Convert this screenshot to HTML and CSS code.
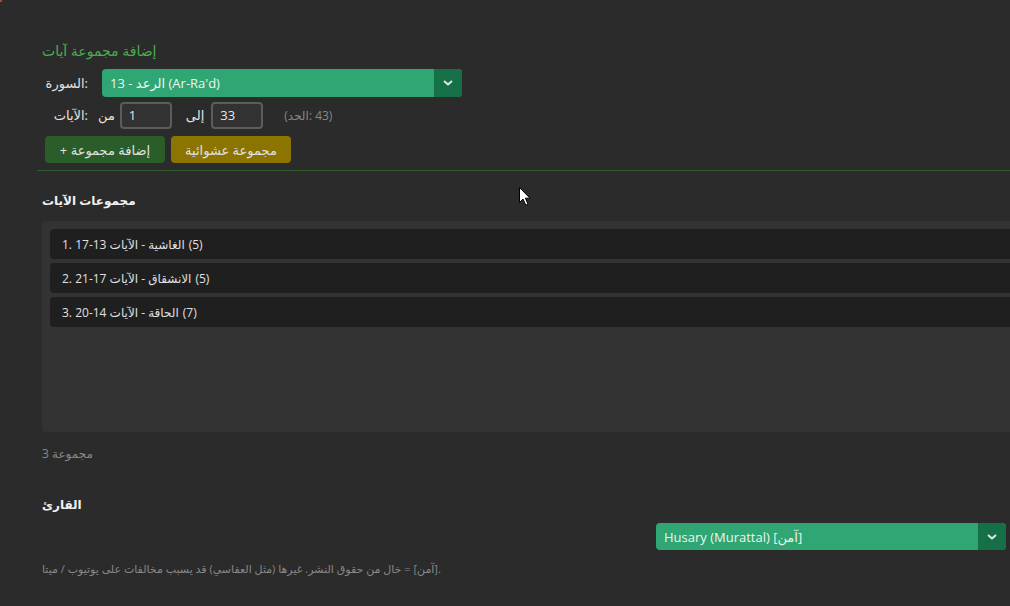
FILE: index.html
```html
<!DOCTYPE html>
<html lang="ar">
<head>
    <meta charset="UTF-8">
    <title>مجموعات الآيات</title>
    <link rel="stylesheet" href="styles.css">
</head>
<body>
<div class="corner-dot"></div>
<div class="panel">
    <section class="add-set">
        <h3 class="add-title">إضافة مجموعة آيات</h3>
        <div class="form-row">
            <label class="row-label">السورة:</label>
            <div class="select-wrap surah-select">
                <select name="surah">
                    <option value="13">13 - الرعد (Ar-Ra'd)</option>
                </select>
                <span class="select-arrow">
                    <svg width="10" height="6" viewBox="0 0 10 6"><polyline points="1,1 5,4.5 9,1" fill="none" stroke="#e6e6e6" stroke-width="2"/></svg>
                </span>
            </div>
        </div>
        <div class="form-row">
            <label class="row-label">الآيات:</label>
            <span class="row-word">من</span>
            <input type="number" name="from" value="1" class="ayah-input">
            <span class="row-word word-to">إلى</span>
            <input type="number" name="to" value="33" class="ayah-input">
            <span class="limit"><span>(الحد:</span><span>&nbsp;43)</span></span>
        </div>
        <div class="btn-row">
            <button class="btn btn-add">+ إضافة مجموعة</button>
            <button class="btn btn-random">مجموعة عشوائية</button>
        </div>
    </section>

    <section class="sets">
        <h3 class="section-title">مجموعات الآيات</h3>
        <div class="set-list">
            <div class="set-item"><span>1. الغاشية - الآيات 13-17</span><span>(5)</span></div>
            <div class="set-item"><span>2. الانشقاق - الآيات 17-21</span><span>(5)</span></div>
            <div class="set-item"><span>3. الحاقة - الآيات 14-20</span><span>(7)</span></div>
        </div>
        <div class="set-total">3 مجموعة</div>
    </section>

    <section class="reciter">
        <h3 class="section-title">القارئ</h3>
        <div class="reciter-row">
            <div class="select-wrap reciter-select">
                <select name="reciter">
                    <option value="husary">Husary (Murattal) [آمن]</option>
                </select>
                <span class="select-arrow">
                    <svg width="10" height="6" viewBox="0 0 10 6"><polyline points="1,1 5,4.5 9,1" fill="none" stroke="#e6e6e6" stroke-width="2"/></svg>
                </span>
            </div>
        </div>
        <p class="note"><bdi dir="rtl">[آمن] = خال من حقوق النشر. غيرها (مثل العفاسي) قد يسبب مخالفات على يوتيوب / ميتا</bdi>.</p>
    </section>
</div>
<svg class="cursor" width="14" height="21" viewBox="0 0 14 21">
    <path d="M1.5 1.5 L1.5 16.5 L5 13 L7.8 19.2 L10 18.2 L7.4 12.2 L12 12.2 Z" fill="#fff" stroke="#000" stroke-width="1"/>
</svg>
</body>
</html>
```

FILE: styles.css
```css
body {
    margin: 0;
    background-color: #2b2b2b;
    color: #e6e6e6;
    font-family: "Open Sans", "DejaVu Sans", sans-serif;
    font-size: 13px;
    overflow: hidden;
}

.corner-dot {
    position: absolute;
    left: 0;
    top: 0;
    width: 2px;
    height: 2px;
    background-color: #d03a2a;
}

.panel {
    padding: 41px 0 0 37px;
    width: 1100px;
}

.add-set {
    padding: 0 5px 7px;
    border-bottom: 1px solid #2f5d2b;
}

.add-title {
    margin: 0 0 8px;
    font-size: 14px;
    line-height: 20px;
    font-weight: normal;
    color: #4cae4c;
}

.form-row {
    display: flex;
    align-items: center;
    height: 28px;
    margin-bottom: 4px;
}

.row-label {
    min-width: 46px;
    text-align: right;
    margin-right: 14px;
    color: #e0e0e0;
}

.row-word {
    margin-right: 5px;
    margin-left: -4px;
}

.word-to {
    margin-left: 14px;
    margin-right: 7px;
}

.ayah-input {
    width: 52px;
    height: 27px;
    box-sizing: border-box;
    padding: 0 7px;
    background-color: #323232;
    border: 2px solid #5c5c5c;
    border-radius: 4px;
    color: #e6e6e6;
    font-family: inherit;
    font-size: 13px;
    -moz-appearance: textfield;
}

.ayah-input::-webkit-outer-spin-button,
.ayah-input::-webkit-inner-spin-button {
    -webkit-appearance: none;
    margin: 0;
}

.limit {
    display: inline-flex;
    margin-left: 21px;
    color: #888;
    font-size: 12px;
}

.select-wrap {
    display: flex;
    height: 28px;
    border-radius: 4px;
    overflow: hidden;
    background-color: #2fa673;
}

.select-wrap select {
    flex: 1;
    -webkit-appearance: none;
    appearance: none;
    border: none;
    outline: none;
    background: transparent;
    color: #eef5ef;
    padding: 0 8px;
    font-family: inherit;
    font-size: 13px;
}

.select-arrow {
    width: 28px;
    display: flex;
    align-items: center;
    justify-content: center;
    background-color: #156f47;
}

.surah-select {
    width: 360px;
}

.btn-row {
    display: flex;
    gap: 6px;
    margin: 7px 0 0 3px;
}

.btn {
    width: 120px;
    height: 27px;
    border: none;
    border-radius: 4px;
    color: #e0e0e0;
    font-family: inherit;
    font-size: 13px;
    cursor: pointer;
}

.btn-add {
    background-color: #2b5d2b;
}

.btn-random {
    background-color: #8b7400;
}

.sets,
.reciter {
    padding: 0 5px;
}

.section-title {
    margin: 21px 0 11px;
    font-size: 12px;
    line-height: 18px;
    font-weight: bold;
    color: #f0f0f0;
}

.set-list {
    height: 211px;
    box-sizing: border-box;
    padding: 8px;
    background-color: #333;
    border-radius: 4px;
}

.set-item {
    height: 30px;
    display: flex;
    align-items: center;
    gap: 4px;
    padding: 0 12px;
    margin-bottom: 4px;
    background-color: #1f1f1f;
    border-radius: 4px;
    font-size: 12px;
    color: #e0e0e0;
}

.set-total {
    margin-top: 14px;
    line-height: 16px;
    font-size: 12px;
    color: #888;
}

.reciter .section-title {
    margin-top: 34px;
    margin-bottom: 9px;
}

.reciter-row {
    width: 964px;
    display: flex;
    justify-content: flex-end;
}

.reciter-select {
    width: 350px;
    height: 27px;
}

.note {
    margin: 12px 0 0;
    font-size: 11px;
    line-height: 14px;
    color: #888;
}

.cursor {
    position: absolute;
    left: 518px;
    top: 186px;
}
```
